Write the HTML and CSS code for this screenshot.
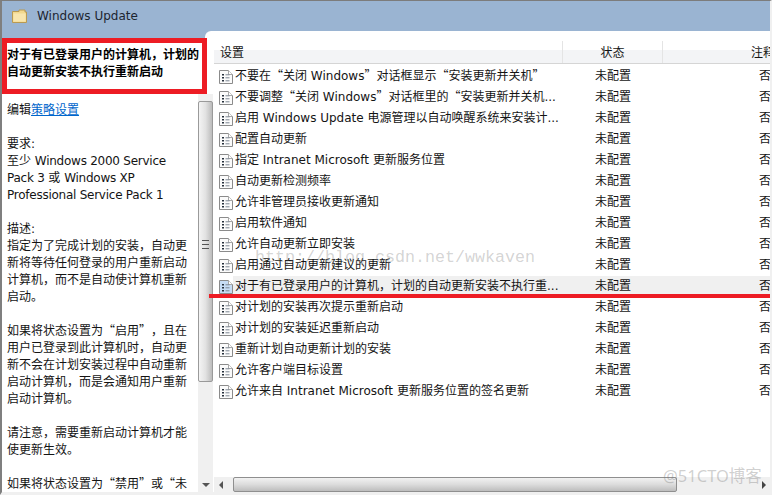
FILE: index.html
```html
<!DOCTYPE html>
<html lang="zh-CN">
<head>
    <meta charset="UTF-8">
    <meta name="viewport" content="width=device-width, initial-scale=1.0">
    <title>Windows Update</title>
    <link rel="stylesheet" href="styles.css">
</head>
<body>

    <svg class="defs" width="0" height="0">
        <symbol id="doc" viewBox="0 0 14 14">
            <path d="M.5 .5H9.5L13.5 4.5V13.5H.5Z" stroke="#8b8b8b"/>
            <path d="M9.5 .5V4.5H13.5" fill="#fff" stroke="#a8a8a8"/>
            <path d="M3 4h2v1.500H3zM3 7h2v1.500H3zM3 10h2v1.500H3z" fill="#26303c"/>
            <path d="M6.500 4.800h4M6.500 7.800h4M6.500 10.800h4" stroke="#7d8793" fill="none"/>
        </symbol>
    </svg>

    <div class="window">
        <div class="title-bar">
            <svg class="folder" width="15" height="14" viewBox="0 0 15 14">
                <path d="M1 2.500H7V1H13V3H14.500V13.500H.5V2.500Z" fill="#f2d98f" stroke="#b99a52"/>
                <path d="M1.500 4.500H13.500V12.500H1.500Z" fill="#f8e6ae"/>
            </svg>
            <span>Windows Update</span>
        </div>

        <div class="content">
            <div class="left">
                <div class="heading">对于有已登录用户的计算机，计划的自动更新安装不执行重新启动</div>
                <div class="left-body">
                    <div class="desc">
                        <p>编辑<a href="#">策略设置</a></p>
                        <p>要求:<br>至少 <span class="en">Windows 2000 Service Pack 3</span> 或 <span class="en">Windows XP Professional Service Pack 1</span></p>
                        <p>描述:<br>指定为了完成计划的安装，自动更新将等待任何登录的用户重新启动计算机，而不是自动使计算机重新启动。</p>
                        <p>如果将状态设置为<span class="q">“</span>启用<span class="q">”</span>，且在用户已登录到此计算机时，自动更新不会在计划安装过程中自动重新启动计算机，而是会通知用户重新启动计算机。</p>
                        <p>请注意，需要重新启动计算机才能使更新生效。</p>
                        <p>如果将状态设置为<span class="q">“</span>禁用<span class="q">”</span>或<span class="q">“</span>未</p>
                    </div>
                    <div class="vscroll">
                        <div class="vthumb"><span class="grip"></span></div>
                        <div class="vtrack"><span class="arrow-down"></span></div>
                    </div>
                </div>
            </div>

            <div class="list">
                <div class="head">
                    <div class="col-name">设置</div>
                    <div class="col-status">状态</div>
                    <div class="col-note">注释</div>
                </div>
                <div class="rows">
                    <div class="row"><svg class="doc"><use href="#doc"/></svg><div class="label">不要在<span class="q">“</span>关闭 Windows<span class="q">”</span>对话框显示<span class="q">“</span>安装更新并关机<span class="q">”</span></div><div class="status">未配置</div><div class="note">否</div></div>
                    <div class="row"><svg class="doc"><use href="#doc"/></svg><div class="label">不要调整<span class="q">“</span>关闭 Windows<span class="q">”</span>对话框里的<span class="q">“</span>安装更新并关机...</div><div class="status">未配置</div><div class="note">否</div></div>
                    <div class="row"><svg class="doc"><use href="#doc"/></svg><div class="label">启用 Windows Update 电源管理以自动唤醒系统来安装计...</div><div class="status">未配置</div><div class="note">否</div></div>
                    <div class="row"><svg class="doc"><use href="#doc"/></svg><div class="label">配置自动更新</div><div class="status">未配置</div><div class="note">否</div></div>
                    <div class="row"><svg class="doc"><use href="#doc"/></svg><div class="label">指定 Intranet Microsoft 更新服务位置</div><div class="status">未配置</div><div class="note">否</div></div>
                    <div class="row"><svg class="doc"><use href="#doc"/></svg><div class="label">自动更新检测频率</div><div class="status">未配置</div><div class="note">否</div></div>
                    <div class="row"><svg class="doc"><use href="#doc"/></svg><div class="label">允许非管理员接收更新通知</div><div class="status">未配置</div><div class="note">否</div></div>
                    <div class="row"><svg class="doc"><use href="#doc"/></svg><div class="label">启用软件通知</div><div class="status">未配置</div><div class="note">否</div></div>
                    <div class="row"><svg class="doc"><use href="#doc"/></svg><div class="label">允许自动更新立即安装</div><div class="status">未配置</div><div class="note">否</div></div>
                    <div class="row"><svg class="doc"><use href="#doc"/></svg><div class="label">启用通过自动更新建议的更新</div><div class="status">未配置</div><div class="note">否</div></div>
                    <div class="row selected"><svg class="doc"><use href="#doc"/></svg><div class="label">对于有已登录用户的计算机，计划的自动更新安装不执行重...</div><div class="status">未配置</div><div class="note">否</div></div>
                    <div class="row"><svg class="doc"><use href="#doc"/></svg><div class="label">对计划的安装再次提示重新启动</div><div class="status">未配置</div><div class="note">否</div></div>
                    <div class="row"><svg class="doc"><use href="#doc"/></svg><div class="label">对计划的安装延迟重新启动</div><div class="status">未配置</div><div class="note">否</div></div>
                    <div class="row"><svg class="doc"><use href="#doc"/></svg><div class="label">重新计划自动更新计划的安装</div><div class="status">未配置</div><div class="note">否</div></div>
                    <div class="row"><svg class="doc"><use href="#doc"/></svg><div class="label">允许客户端目标设置</div><div class="status">未配置</div><div class="note">否</div></div>
                    <div class="row"><svg class="doc"><use href="#doc"/></svg><div class="label">允许来自 Intranet Microsoft 更新服务位置的签名更新</div><div class="status">未配置</div><div class="note">否</div></div>
                </div>
                <div class="hscroll">
                    <span class="arrow-left"></span>
                    <div class="hthumb"></div>
                    <span class="arrow-right"></span>
                </div>
            </div>
        </div>

        <!-- annotations drawn over the screenshot -->
        <div class="red-line"></div>
        <div class="mark-csdn">http://blog.csdn.net/wwkaven</div>
        <div class="mark-cto">@51CTO博客</div>
    </div>

</body>
</html>
```

FILE: styles.css
```css
html, body {
    margin: 0;
    padding: 0;
}

body {
    font-family: "DejaVu Sans", "Noto Sans CJK SC", sans-serif;
    font-size: 12px;
    line-height: 17px;
    color: #141414;
    text-spacing-trim: space-all;
    overflow: hidden;
}

.defs {
    position: absolute;
}

.q {
    font-family: "Noto Sans CJK SC", sans-serif;
    line-height: 0;
}

.en {
    letter-spacing: -0.25px;
}

.window {
    position: relative;
    width: 772px;
    height: 495px;
    box-sizing: border-box;
    display: flex;
    flex-direction: column;
    overflow: hidden;
    background-color: #9ab4d2;
    border-top: 1px solid #7c7c7c;
    border-left: 2px solid #7f7f7f;
    border-right: 2px solid #f0f0f0;
    border-bottom: 3px solid #f0f0f0;
}

.title-bar {
    height: 30px;
    flex: none;
    display: flex;
    align-items: center;
    padding-left: 10px;
    gap: 10px;
}

.title-bar span {
    color: #1c2530;
}

.content {
    flex: 1;
    display: flex;
    min-height: 0;
}

.left {
    width: 212px;
    flex: none;
    padding-top: 7px;
    display: flex;
    flex-direction: column;
    box-sizing: border-box;
    position: relative;
    z-index: 1;
}

.heading {
    width: 205px;
    height: 56px;
    box-sizing: border-box;
    padding: 4px 0 0 0;
    border: 5px solid #ed1c24;
    background-color: #fff;
    font-weight: bold;
    color: #000;
}

.left-body {
    flex: 1;
    min-height: 0;
    display: flex;
    background-color: #fff;
}

.desc {
    width: 196px;
    flex: none;
    box-sizing: border-box;
    padding: 8px 7px 0 5px;
    overflow: hidden;
}

.desc p {
    margin: 0 0 17px;
}

.desc a {
    color: #0066cc;
}

.vscroll {
    width: 15px;
    flex: none;
    padding-top: 7px;
    display: flex;
    flex-direction: column;
    background-color: #f0f0f0;
}

.vthumb {
    height: 281px;
    box-sizing: border-box;
    border: 1px solid #9a9a9a;
    border-radius: 2px;
    background: linear-gradient(to right, #f4f4f4, #e2e2e2 50%, #bcbcbc);
    display: flex;
    align-items: center;
    justify-content: center;
}

.grip {
    width: 7px;
    height: 7px;
    margin-top: 5px;
    border-top: 1px solid #555;
    border-bottom: 1px solid #555;
    background: linear-gradient(#555, #555) center / 100% 1px no-repeat;
}

.vtrack {
    flex: 1;
    display: flex;
    align-items: flex-end;
    justify-content: center;
    padding-bottom: 5px;
}

.arrow-down {
    border-left: 4px solid transparent;
    border-right: 4px solid transparent;
    border-top: 4px solid #555;
}

.list {
    flex: 1;
    min-width: 0;
    margin-left: -9px;
    padding-left: 9px;
    display: flex;
    flex-direction: column;
    background-color: #fff;
    border-top-left-radius: 6px;
}

.head {
    flex: none;
    height: 23px;
    margin-top: 10px;
    display: flex;
    box-sizing: border-box;
    border-bottom: 1px solid #d5d5d5;
    background: linear-gradient(#fff 40%, #f3f4f6 40%);
}

.col-name {
    width: 349px;
    flex: none;
    padding: 4px 0 0 6px;
    box-sizing: border-box;
    border-right: 1px solid #e4e4e4;
}

.col-status {
    width: 100px;
    flex: none;
    padding-top: 4px;
    text-align: center;
    box-sizing: border-box;
    border-right: 1px solid #e4e4e4;
}

.col-note {
    padding: 4px 0 0 88px;
    white-space: nowrap;
    overflow: hidden;
    flex: 1;
}

.rows {
    flex: 1;
    min-height: 0;
    padding-top: 2px;
}

.row {
    height: 21px;
    display: flex;
    align-items: center;
    padding-left: 5px;
    white-space: nowrap;
}

.doc {
    width: 14px;
    height: 14px;
    flex: none;
    fill: #fbfbfb;
}

.label {
    width: 330px;
    flex: none;
    padding-left: 2px;
    line-height: 21px;
    overflow: hidden;
}

.status {
    width: 100px;
    flex: none;
    padding-left: 30px;
    box-sizing: border-box;
    line-height: 21px;
}

.note {
    flex: 1;
    padding-left: 94px;
    line-height: 21px;
    overflow: hidden;
}

.selected .doc {
    fill: #c6dcf4;
}

.selected .label,
.selected .status,
.selected .note {
    background-color: #f0f0f0;
}

.hscroll {
    flex: none;
    height: 15px;
    display: flex;
    align-items: center;
    background-color: #f0f0f0;
}

.arrow-left {
    margin-left: 5px;
    border-top: 4px solid transparent;
    border-bottom: 4px solid transparent;
    border-right: 4px solid #555;
}

.hthumb {
    width: 444px;
    height: 15px;
    margin-left: 10px;
    box-sizing: border-box;
    border: 1px solid #8f8f8f;
    border-radius: 2px;
    background: linear-gradient(#f2f2f2, #dcdcdc 50%, #bdbdbd);
}

.arrow-right {
    margin-left: 85px;
    border-top: 4px solid transparent;
    border-bottom: 4px solid transparent;
    border-left: 4px solid #444;
}

.red-line {
    position: absolute;
    left: 207px;
    right: -2px;
    top: 293px;
    height: 4px;
    background-color: #ed1c24;
    z-index: 2;
}

.mark-csdn {
    position: absolute;
    left: 253px;
    top: 247px;
    font-family: "Liberation Mono", monospace;
    font-size: 16.67px;
    line-height: 20px;
    color: rgba(110, 110, 110, 0.3);
    z-index: 2;
}

.mark-cto {
    position: absolute;
    left: 661px;
    top: 465px;
    font-family: "Noto Sans", "Noto Sans CJK SC", sans-serif;
    font-size: 16.5px;
    line-height: 20px;
    color: rgba(120, 120, 120, 0.35);
    z-index: 2;
}
```
